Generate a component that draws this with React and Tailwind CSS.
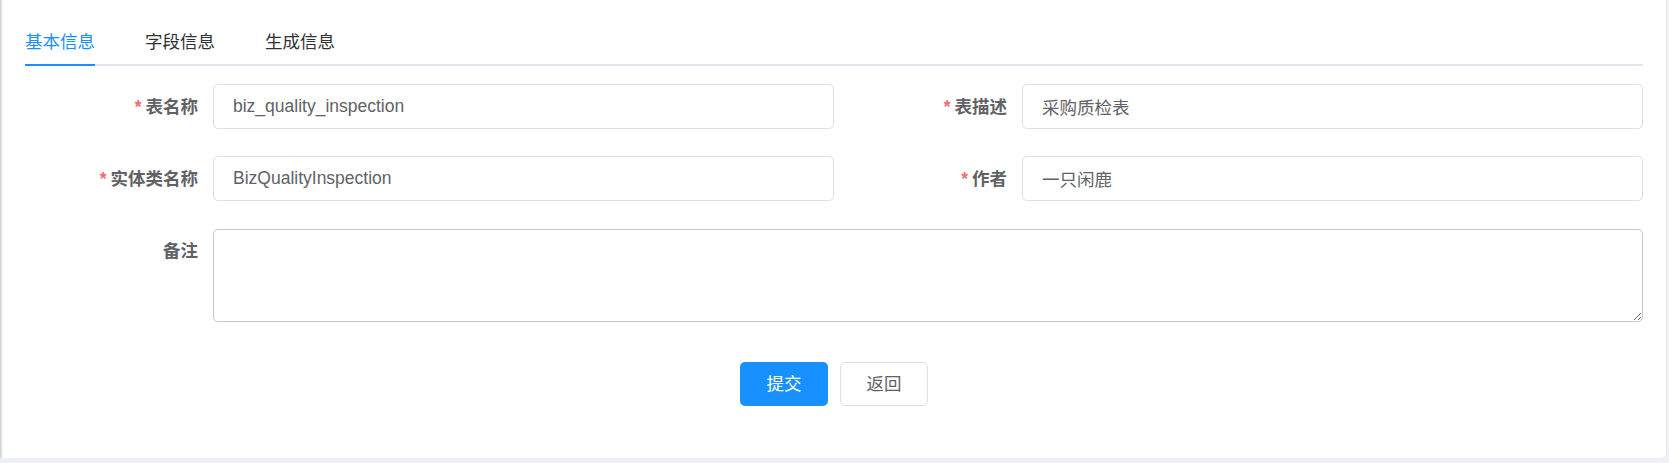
import { useState } from 'react';

const TABS = ['基本信息', '字段信息', '生成信息'];

function Field({ label, required, children, top }) {
  return (
    <div className={`flex ${top ? 'items-start' : 'items-center'}`}>
      <label className="w-[188px] shrink-0 pr-[15px] text-right leading-[44px] font-bold text-[#606266]">
        {required && <span className="mr-[4px] text-[#f56c6c]">*</span>}
        {label}
      </label>
      <div className="flex-1">{children}</div>
    </div>
  );
}

function TextInput({ value }) {
  return (
    <input
      readOnly
      value={value}
      className="h-[45px] w-full rounded-[5px] border border-[#dcdfe6] bg-white px-[19px] text-[#606266] outline-none"
    />
  );
}

export default function App() {
  const [tab, setTab] = useState(0);

  return (
    <div className="h-[463px] w-[1669px] overflow-hidden bg-[#eef0f4] font-['Liberation_Sans','Noto_Sans_CJK_SC',sans-serif] text-[17.5px]">
      <div className="flex h-[458px] w-[1667px] rounded-br-[5px] border-r border-[#e6e9f0] bg-white">
        {/* sidebar edge shadow */}
        <div className="w-[3px] shrink-0 bg-gradient-to-r from-[#c9cdd6] to-white" />
        <div className="flex-1 pl-[22px] pr-[23px] pt-[20px]">
          <div className="relative flex border-b-2 border-[#e2e5ee]">
            {TABS.map((t, i) => (
              <button
                key={t}
                onClick={() => setTab(i)}
                className={`relative h-[44px] ${i === 0 ? 'pr-[25px]' : 'px-[25px]'} ${
                  tab === i ? 'text-[#1890ff]' : 'text-[#303133]'
                }`}
              >
                {t}
                {tab === i && (
                  <span
                    className={`absolute bottom-[-2px] h-[2px] bg-[#1890ff] ${
                      i === 0 ? 'left-0 right-[25px]' : 'left-[25px] right-[25px]'
                    }`}
                  />
                )}
              </button>
            ))}
          </div>

          <div className="mt-[18px] grid grid-cols-2 gap-y-[27px]">
            <Field label="表名称" required>
              <TextInput value="biz_quality_inspection" />
            </Field>
            <Field label="表描述" required>
              <TextInput value="采购质检表" />
            </Field>
            <Field label="实体类名称" required>
              <TextInput value="BizQualityInspection" />
            </Field>
            <Field label="作者" required>
              <TextInput value="一只闲鹿" />
            </Field>
          </div>

          <div className="mt-[28px]">
            <Field label="备注" top>
              <textarea className="block h-[93px] w-full rounded-[5px] border border-[#c4c7ce] bg-white px-[19px] py-[8px] text-[#606266] outline-none" />
            </Field>
          </div>

          <div className="mt-[40px] flex justify-center gap-[12px]">
            <button className="h-[44px] w-[88px] rounded-[5px] bg-[#1890ff] text-white">提交</button>
            <button className="h-[44px] w-[88px] rounded-[5px] border border-[#dcdfe6] bg-white text-[#606266]">
              返回
            </button>
          </div>
        </div>
      </div>
    </div>
  );
}
